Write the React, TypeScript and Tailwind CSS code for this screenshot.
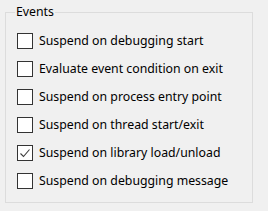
import React from 'react';

const events = [
  { label: 'Suspend on debugging start', checked: false },
  { label: 'Evaluate event condition on exit', checked: false },
  { label: 'Suspend on process entry point', checked: false },
  { label: 'Suspend on thread start/exit', checked: false },
  { label: 'Suspend on library load/unload', checked: true },
  { label: 'Suspend on debugging message', checked: false },
];

function CheckBox({ checked }: { checked: boolean }) {
  return (
    <span className="w-[16px] h-[16px] border border-[#333333] bg-white flex items-center justify-center shrink-0">
      {checked && (
        <svg width="14" height="14" viewBox="0 0 14 14">
          <path d="M2.5 7.5 L5.5 10.5 L11.5 3.5" fill="none" stroke="#3c3c3c" strokeWidth="1.1" />
        </svg>
      )}
    </span>
  );
}

export default function App() {
  return (
    <div className="w-[268px] h-[211px] bg-[#f0f0f0] pl-[5px] pt-[12px] text-black text-[12.3px] font-['Noto_Sans',sans-serif]">
      <div className="relative w-[248px] h-[191px] border border-[#dcdcdc] pl-[11px] pt-[14px]">
        <span className="absolute -top-[9px] left-[9px] bg-[#f0f0f0] px-[1px] leading-[16px]">Events</span>
        {events.map((e) => (
          <label key={e.label} className="h-[28px] flex items-center gap-[6px]">
            <CheckBox checked={e.checked} />
            <span className="leading-[16px]">{e.label}</span>
          </label>
        ))}
      </div>
    </div>
  );
}
